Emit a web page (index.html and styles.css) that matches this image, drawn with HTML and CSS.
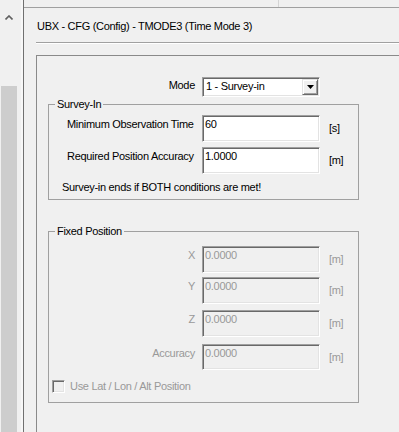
FILE: index.html
```html
<!DOCTYPE html>
<html>
<head>
<meta charset="utf-8">
<link rel="stylesheet" href="styles.css">
</head>
<body>
<div class="window">
  <div class="sidebar">
    <div class="sb-btn">
      <svg width="8" height="5" viewBox="0 0 8 5"><path d="M0.5 4.5 L4 1 L7.5 4.5" fill="none" stroke="#606060" stroke-width="1.6"/></svg>
    </div>
    <div class="sb-thumb"></div>
  </div>
  <div class="split"></div>
  <div class="main">
    <div class="topstrip"><div class="topdiv"></div></div>
    <div class="panel">
      <div class="title">UBX - CFG (Config) - TMODE3 (Time Mode 3)</div>
      <div class="sep"></div>
      <div class="content">
        <div class="mode-row">
          <div class="lbl right">Mode</div>
          <div class="combo">
            <div class="combo-text">1 - Survey-in</div>
            <div class="combo-btn">
              <svg width="7" height="4" viewBox="0 0 7 4"><path d="M0 0 H7 L3.5 4 Z" fill="#000"/></svg>
            </div>
          </div>
        </div>
        <fieldset class="group survey">
          <legend>Survey-In</legend>
          <div class="frow r1">
            <div class="lbl left">Minimum Observation Time</div>
            <div class="field">60</div>
            <div class="unit">[s]</div>
          </div>
          <div class="frow r2">
            <div class="lbl left">Required Position Accuracy</div>
            <div class="field">1.0000</div>
            <div class="unit">[m]</div>
          </div>
          <div class="note">Survey-in ends if BOTH conditions are met!</div>
        </fieldset>
        <fieldset class="group fixed">
          <legend>Fixed Position</legend>
          <div class="frow dis x">
            <div class="lbl right">X</div>
            <div class="field">0.0000</div>
            <div class="unit">[m]</div>
          </div>
          <div class="frow dis y">
            <div class="lbl right">Y</div>
            <div class="field">0.0000</div>
            <div class="unit">[m]</div>
          </div>
          <div class="frow dis z">
            <div class="lbl right">Z</div>
            <div class="field">0.0000</div>
            <div class="unit">[m]</div>
          </div>
          <div class="frow dis acc">
            <div class="lbl right">Accuracy</div>
            <div class="field">0.0000</div>
            <div class="unit">[m]</div>
          </div>
          <div class="check-row">
            <div class="checkbox"></div>
            <div class="check-text">Use Lat / Lon / Alt Position</div>
          </div>
        </fieldset>
      </div>
    </div>
  </div>
</div>
</body>
</html>
```
FILE: styles.css
```css
* { box-sizing: border-box; }
html, body { margin: 0; height: 100%; }
body {
  background: #f0f0f0;
  font-family: "Liberation Sans", Arial, sans-serif;
  font-size: 11px;
  line-height: 13px;
  letter-spacing: -0.3px;
  color: #000;
  overflow: hidden;
}
.window { display: flex; height: 432px; }
.sidebar {
  width: 17px;
  display: flex;
  flex-direction: column;
  padding-top: 9px;
}
.sb-btn {
  height: 17px;
  display: flex;
  align-items: center;
  justify-content: center;
}
.sb-thumb {
  margin-top: 60px;
  margin-left: 1px;
  flex: 1;
  background: #cdcdcd;
}
.split {
  width: 6px;
  background: #f0f0f0;
  border-left: 2px solid #f0f0f0;
  border-right: 2px solid #f7f7f7;
}
.main {
  flex: 1;
  min-width: 0;
  border-left: 1px solid #707070;
  display: flex;
  flex-direction: column;
}
.topstrip {
  height: 8px;
  border-bottom: 1px solid #a0a0a0;
  display: flex;
  padding-left: 254px;
}
.topdiv { width: 1px; background: #d4d4d4; }
.panel {
  flex: 1;
  padding-left: 12px;
  display: flex;
  flex-direction: column;
}
.title {
  height: 34px;
  padding: 12px 0 0 1px;
  white-space: nowrap;
}
.sep {
  height: 2px;
  border-top: 1px solid #a0a0a0;
  border-bottom: 1px solid #ffffff;
}
.content {
  flex: 1;
  margin-top: 11px;
  border-top: 1px solid #8a8a8a;
  border-left: 1px solid #8a8a8a;
  padding: 21px 0 0 11px;
}
.mode-row { display: flex; align-items: flex-start; gap: 7px; }
.mode-row .lbl { width: 147px; padding-top: 2px; }
.lbl { white-space: nowrap; }
.lbl.right { text-align: right; }
.lbl.left { text-align: left; padding-left: 18px; }
.combo {
  width: 118px;
  height: 20px;
  background: #fff;
  border: 1px solid;
  border-color: #a0a0a0 #fff #fff #a0a0a0;
  box-shadow: inset 1px 1px #696969, inset -1px -1px #e3e3e3;
  padding: 1px;
  display: flex;
}
.combo-text { flex: 1; padding: 1px 0 0 2px; }
.combo-btn {
  width: 16px;
  height: 16px;
  background: #f0f0f0;
  border: 1px solid;
  border-color: #e3e3e3 #696969 #696969 #e3e3e3;
  box-shadow: inset 1px 1px #fff, inset -1px -1px #a0a0a0;
  display: flex;
  align-items: center;
  justify-content: center;
}
.group {
  width: 311px;
  margin: 0;
  min-width: 0;
  border: 1px solid #a0a0a0;
  padding: 0;
}
.group legend {
  margin-left: 6px;
  padding: 0 2px;
  line-height: 13px;
}
.survey { margin-top: 1px; padding-bottom: 5px; }
.fixed { margin-top: 25px; padding-bottom: 9px; }
.frow {
  display: flex;
  align-items: flex-start;
  gap: 7px;
  height: 27px;
}
.frow .lbl { width: 146px; padding-top: 3px; }
.field {
  width: 118px;
  height: 27px;
  background: #fff;
  border: 1px solid;
  border-color: #a0a0a0 #fff #fff #a0a0a0;
  box-shadow: inset 1px 1px #696969, inset -1px -1px #e3e3e3;
  padding: 2px 0 0 2px;
}
.unit { align-self: center; margin-left: 2px; }
.r1 { margin-top: 4px; }
.r2 { margin-top: 5px; }
.note { margin-top: 7px; padding-left: 13px; white-space: nowrap; }
.dis { color: #999; }
.dis .field { background: #f0f0f0; }
.x { margin-top: 8px; }
.y { margin-top: 4px; }
.z { margin-top: 6px; }
.acc { margin-top: 7px; height: 26px; }
.acc .field { height: 26px; }
.check-row {
  display: flex;
  align-items: center;
  margin-top: 10px;
  padding-left: 3px;
  gap: 5px;
  color: #999;
}
.checkbox {
  width: 13px;
  height: 13px;
  background: #f0f0f0;
  border: 1px solid;
  border-color: #a0a0a0 #fff #fff #a0a0a0;
  box-shadow: inset 1px 1px #696969, inset -1px -1px #e3e3e3;
}
.check-text { white-space: nowrap; }
```
